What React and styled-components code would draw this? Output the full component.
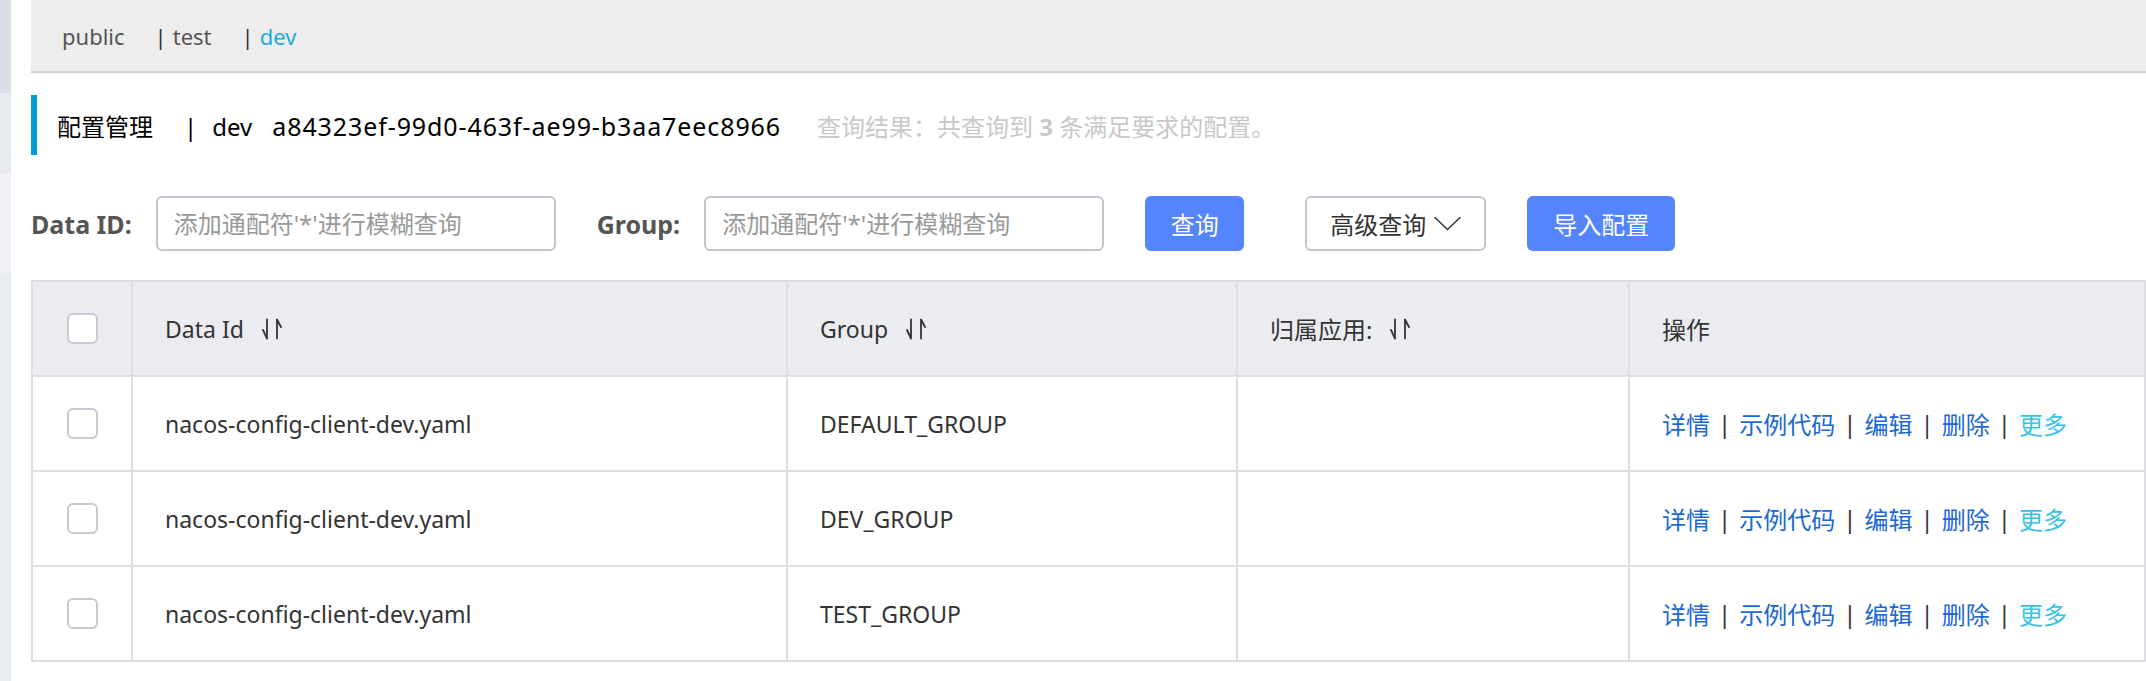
import React from 'react';
import styled, { createGlobalStyle } from 'styled-components';

const GlobalStyle = createGlobalStyle`
  html, body, #root {
    height: 100%;
  }
  body {
    margin: 0;
    background: #fff;
    font-family: "Noto Sans", "Noto Sans CJK SC", sans-serif;
    color: #333;
  }
  * {
    box-sizing: border-box;
  }
`;

const rows = [
  { dataId: 'nacos-config-client-dev.yaml', group: 'DEFAULT_GROUP', app: '' },
  { dataId: 'nacos-config-client-dev.yaml', group: 'DEV_GROUP', app: '' },
  { dataId: 'nacos-config-client-dev.yaml', group: 'TEST_GROUP', app: '' },
];

const actions = ['详情', '示例代码', '编辑', '删除', '更多'];

const SortIcon = () => (
  <svg width="20" height="22" viewBox="0 0 20 22" fill="none" stroke="#333" strokeWidth="1.8" strokeLinecap="round" strokeLinejoin="round">
    <path d="M5 1.5 V20.5 L1 12" />
    <path d="M15 20.5 V1.5 L19 9" />
  </svg>
);

const Chevron = () => (
  <svg width="27" height="15" viewBox="0 0 27 15" fill="none" stroke="#333" strokeWidth="1.5" strokeLinecap="round" strokeLinejoin="round">
    <polyline points="1,1.5 13.5,13.5 26,1.5" />
  </svg>
);

export default function App() {
  return (
    <>
      <GlobalStyle />
      <Page>
        <Sidebar>
          <SideBlock $tone="#d9dde4" $h={93} />
          <SideBlock $tone="#e7eaef" $h={80} />
          <SideBlock $tone="#eff1f4" $h={100} />
          <SideBlock $tone="#e8ebf0" $grow />
        </Sidebar>

        <Main>
          <TabBar>
            <Tab>public</Tab>
            <Tab $sep>test</Tab>
            <Tab $sep $active>dev</Tab>
          </TabBar>

          <TitleRow>
            <Title>
              配置管理<TitleSep>|</TitleSep>dev<NsId>a84323ef-99d0-463f-ae99-b3aa7eec8966</NsId>
            </Title>
            <Summary>
              查询结果：共查询到 <strong>3</strong> 条满足要求的配置。
            </Summary>
          </TitleRow>

          <SearchBar>
            <Field>
              <Label>Data ID:</Label>
              <Input placeholder="添加通配符'*'进行模糊查询" />
            </Field>
            <Field>
              <Label>Group:</Label>
              <Input placeholder="添加通配符'*'进行模糊查询" />
            </Field>
            <Button $primary $w={99}>查询</Button>
            <Button $w={181} $push>
              高级查询 <Chevron />
            </Button>
            <Button $primary $w={148}>导入配置</Button>
          </SearchBar>

          <Table>
            <Cell $head $center>
              <Checkbox />
            </Cell>
            <Cell $head>
              Data Id <SortWrap><SortIcon /></SortWrap>
            </Cell>
            <Cell $head>
              Group <SortWrap><SortIcon /></SortWrap>
            </Cell>
            <Cell $head $cjk>
              归属应用: <SortWrap><SortIcon /></SortWrap>
            </Cell>
            <Cell $head $cjk>操作</Cell>

            {rows.map((r, i) => (
              <React.Fragment key={i}>
                <Cell $center>
                  <Checkbox />
                </Cell>
                <Cell>{r.dataId}</Cell>
                <Cell>{r.group}</Cell>
                <Cell>{r.app}</Cell>
                <Cell $cjk>
                  {actions.map((a, j) => (
                    <React.Fragment key={a}>
                      {j > 0 && <ActionSep>|</ActionSep>}
                      <ActionLink $more={a === '更多'}>{a}</ActionLink>
                    </React.Fragment>
                  ))}
                </Cell>
              </React.Fragment>
            ))}
          </Table>
        </Main>
      </Page>
    </>
  );
}

const Page = styled.div`
  display: flex;
  height: 100vh;
  overflow: hidden;
`;

const Sidebar = styled.aside`
  width: 11px;
  flex-shrink: 0;
  display: flex;
  flex-direction: column;
`;

const SideBlock = styled.div`
  background: ${(p) => p.$tone};
  height: ${(p) => (p.$h ? `${p.$h}px` : 'auto')};
  flex: ${(p) => (p.$grow ? 1 : 'none')};
`;

const Main = styled.main`
  flex: 1;
  min-width: 0;
  margin-left: 20px;
  display: flex;
  flex-direction: column;
`;

const TabBar = styled.nav`
  height: 73px;
  background: #ededed;
  border-bottom: 2px solid #d0d0d0;
  display: flex;
  align-items: center;
  padding-left: 31px;
  gap: 30px;
  font-size: 22px;
`;

const Tab = styled.span`
  color: ${(p) => (p.$active ? '#1eaadf' : '#555')};
  &::before {
    content: ${(p) => (p.$sep ? "'|'" : 'none')};
    color: #333;
    margin-right: 6px;
  }
`;

const TitleRow = styled.div`
  margin-top: 22px;
  height: 60px;
  border-left: 6px solid #009ad6;
  padding-left: 20px;
  display: flex;
  align-items: center;
  gap: 36px;
`;

const Title = styled.h1`
  margin: 0;
  font-size: 24px;
  font-weight: 400;
  color: #000;
`;

const TitleSep = styled.span`
  margin: 0 15px 0 31px;
`;

const NsId = styled.span`
  margin-left: 20px;
  font-size: 25px;
  letter-spacing: 0.9px;
`;

const Summary = styled.span`
  font-size: 24px;
  color: #c8c8c8;
  strong {
    font-weight: 700;
  }
`;

const SearchBar = styled.div`
  margin-top: 41px;
  display: flex;
  align-items: center;
  gap: 41px;
`;

const Field = styled.label`
  display: flex;
  align-items: center;
  gap: 24px;
`;

const Label = styled.span`
  font-size: 25px;
  font-weight: 700;
  color: #555;
`;

const Input = styled.input`
  width: 400px;
  height: 55px;
  border: 2px solid #c4c6cf;
  border-radius: 6px;
  padding: 0 16px;
  font-family: inherit;
  font-size: 24px;
  color: #333;
  outline: none;
  &::placeholder {
    color: #999;
  }
`;

const Button = styled.button`
  width: ${(p) => p.$w}px;
  height: 55px;
  margin-left: ${(p) => (p.$push ? '20px' : '0')};
  border-radius: 6px;
  border: ${(p) => (p.$primary ? 'none' : '2px solid #c4c6cf')};
  background: ${(p) => (p.$primary ? '#5584ff' : '#fff')};
  color: ${(p) => (p.$primary ? '#fff' : '#333')};
  font-family: inherit;
  font-size: 24px;
  display: flex;
  align-items: center;
  justify-content: center;
  gap: 8px;
  padding: 0;
`;

const Table = styled.div`
  margin-top: 29px;
  display: grid;
  grid-template-columns: 100px 655px 450px 392px 1fr;
  grid-auto-rows: 95px;
  border-top: 2px solid #dcdee3;
  border-left: 2px solid #dcdee3;
  font-size: 23px;
  color: #333;
`;

const Cell = styled.div`
  display: flex;
  align-items: center;
  justify-content: ${(p) => (p.$center ? 'center' : 'flex-start')};
  padding: ${(p) => (p.$center ? '0' : '0 32px')};
  background: ${(p) => (p.$head ? '#ebecf0' : '#fff')};
  border-right: 2px solid #dcdee3;
  border-bottom: 2px solid #dcdee3;
  font-size: ${(p) => (p.$cjk ? '24px' : 'inherit')};
  white-space: nowrap;
`;

const SortWrap = styled.span`
  display: inline-flex;
  margin-left: 18px;
`;

const Checkbox = styled.span`
  width: 31px;
  height: 31px;
  border: 2px solid #c8cad2;
  border-radius: 6px;
  background: #fff;
`;

const ActionLink = styled.a`
  color: ${(p) => (p.$more ? '#38c3e6' : '#1c68d4')};
  cursor: pointer;
`;

const ActionSep = styled.span`
  margin: 0 8px;
  color: #333;
`;
